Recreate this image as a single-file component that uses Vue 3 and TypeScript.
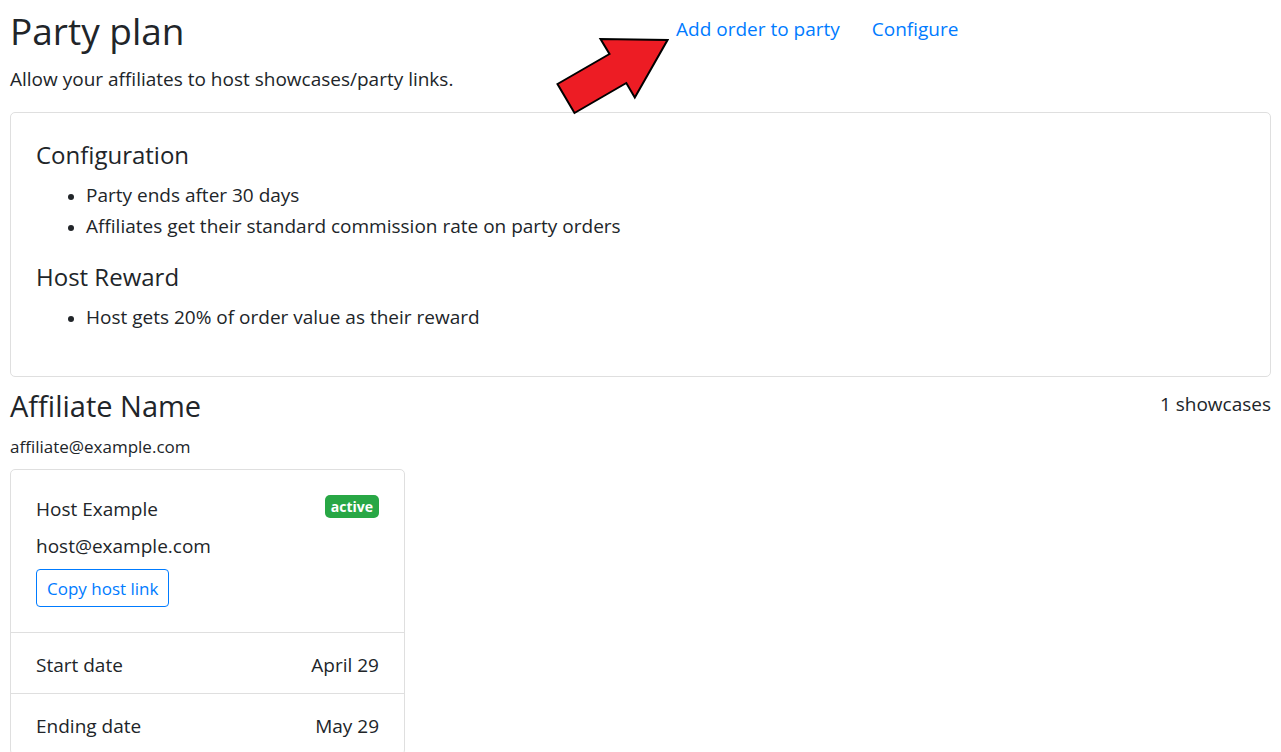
<script setup lang="ts">
interface Showcase {
  host: string
  email: string
  status: string
  dates: { label: string; value: string }[]
}

const configuration: string[] = [
  'Party ends after 30 days',
  'Affiliates get their standard commission rate on party orders',
]
const rewards: string[] = ['Host gets 20% of order value as their reward']

const showcases: Showcase[] = [
  {
    host: 'Host Example',
    email: 'host@example.com',
    status: 'active',
    dates: [
      { label: 'Start date', value: 'April 29' },
      { label: 'Ending date', value: 'May 29' },
    ],
  },
]
</script>

<template>
  <main class="page">
    <header class="top">
      <div>
        <h1>Party plan</h1>
        <p class="lead">Allow your affiliates to host showcases/party links.</p>
      </div>
      <nav class="links">
        <a href="#add-order">Add order to party</a>
        <a href="#configure">Configure</a>
        <svg class="arrow" viewBox="0 0 114 78" aria-hidden="true">
          <path d="M2.500 47 54.500 17 45.500 2 112.500 3 79.800 60.500 71.300 46 19.500 76Z" />
        </svg>
      </nav>
    </header>

    <section class="card settings">
      <h2>Configuration</h2>
      <ul>
        <li v-for="item in configuration" :key="item">{{ item }}</li>
      </ul>
      <h2>Host Reward</h2>
      <ul>
        <li v-for="item in rewards" :key="item">{{ item }}</li>
      </ul>
    </section>

    <section>
      <div class="affiliate">
        <h2 class="name">Affiliate Name</h2>
        <span>{{ showcases.length }} showcases</span>
      </div>
      <p class="affiliate-email">affiliate@example.com</p>

      <div class="grid">
        <article v-for="s in showcases" :key="s.email" class="card">
          <div class="host">
            <div class="host-line">
              <span>{{ s.host }}</span>
              <span class="badge">{{ s.status }}</span>
            </div>
            <div class="host-email">{{ s.email }}</div>
            <button type="button">Copy host link</button>
          </div>
          <dl>
            <div v-for="d in s.dates" :key="d.label" class="date">
              <dt>{{ d.label }}</dt>
              <dd>{{ d.value }}</dd>
            </div>
          </dl>
        </article>
      </div>
    </section>
  </main>
</template>

<style>
body {
  margin: 0;
  background: #fff;
}
</style>

<style scoped>
.page {
  padding: 8px 10px 0;
  color: #212529;
  font-family: "Segoe UI", "Open Sans", "Noto Sans", sans-serif;
  font-size: 19px;
  line-height: 31px;
}
h1,
h2,
p,
ul,
dl,
dd {
  margin: 0;
}
h1,
h2 {
  font-weight: 400;
}
.top {
  display: grid;
  grid-template-columns: 1fr 1fr;
  gap: 39px;
  margin-bottom: 17px;
}
h1 {
  font-size: 37px;
  line-height: 46px;
  margin-bottom: 10px;
}
.links {
  position: relative;
  display: flex;
  align-items: flex-start;
  gap: 32px;
  padding: 6px 16px;
}
.links a {
  color: #007bff;
  text-decoration: none;
}
.arrow {
  position: absolute;
  left: -105px;
  top: 29px;
  width: 114px;
  height: 78px;
}
.arrow path {
  fill: #ed1c24;
  stroke: #000;
  stroke-width: 2;
}
.card {
  border: 1px solid #dfdfdf;
  border-radius: 5px;
}
.settings {
  padding: 27px 25px 3px;
}
h2 {
  font-size: 24px;
  line-height: 30px;
  margin-bottom: 10px;
}
ul {
  padding-left: 50px;
  margin-bottom: 20px;
}
li::marker {
  font-size: 16px;
}
.settings ul:last-child {
  margin-bottom: 40px;
}
.affiliate {
  display: flex;
  justify-content: space-between;
  align-items: flex-start;
  padding-top: 12px;
}
.name {
  font-size: 29px;
  line-height: 34px;
  margin-bottom: 12px;
}
.affiliate-email {
  font-size: 17px;
  line-height: 24px;
  margin-bottom: 10px;
}
.grid {
  display: grid;
  grid-template-columns: repeat(3, 1fr);
  gap: 38px;
}
.host {
  padding: 24px 25px 25px;
}
.host-line {
  display: flex;
  justify-content: space-between;
  align-items: flex-start;
  margin-bottom: 6px;
}
.badge {
  margin-top: 1px;
  padding: 0 6px;
  border-radius: 5px;
  background: #28a745;
  color: #fff;
  font-size: 14px;
  line-height: 23px;
  font-weight: 700;
}
.host-email {
  margin-bottom: 7px;
}
button {
  display: block;
  height: 38px;
  padding: 0 10px;
  border: 1px solid #007bff;
  border-radius: 4px;
  background: transparent;
  color: #007bff;
  font: inherit;
  font-size: 17px;
}
.date {
  display: flex;
  justify-content: space-between;
  padding: 17px 25px 12px;
  border-top: 1px solid #dfdfdf;
}
</style>
